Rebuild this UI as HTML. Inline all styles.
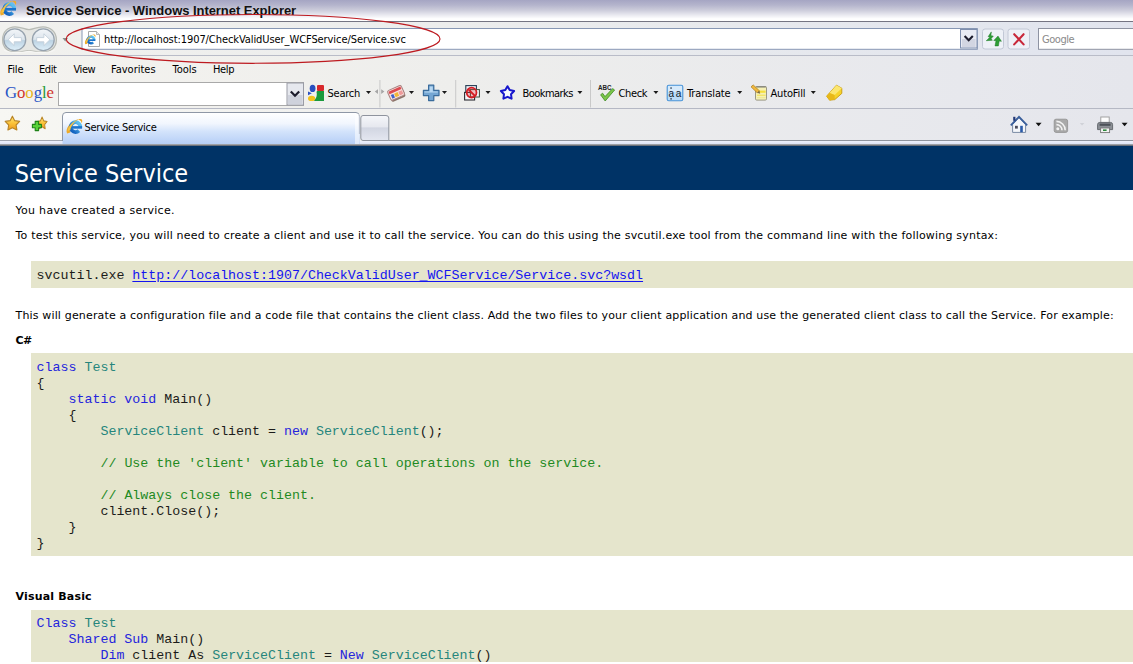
<!DOCTYPE html>
<html>
<head>
<meta charset="utf-8">
<title>Service Service - Windows Internet Explorer</title>
<style>
html,body{margin:0;padding:0;}
body{width:1133px;height:664px;overflow:hidden;background:#fff;position:relative;font-family:"DejaVu Sans Condensed","Liberation Sans",sans-serif;color:#000;}
.abs{position:absolute;}
#titlebar{left:0;top:0;width:1133px;height:21px;background:linear-gradient(#a5a5c3 0px,#b4b4cc 5px,#cbcbda 10px,#e6e6ee 14.5px,#fdfdfe 18.5px,#ffffff 21px);}
#title{left:26px;top:1.7px;font:bold 13px/17px "Liberation Sans",sans-serif;letter-spacing:-0.05px;color:#111;white-space:nowrap;}
#tline{left:0;top:20.7px;width:1133px;height:1.7px;background:#747482;}
#addr{left:0;top:22px;width:1133px;height:33px;background:linear-gradient(90deg,#f1f1ee 0%,#eceded 40%,#e3e6ee 85%,#e1e4ee 100%);}
#addrline{left:0;top:55px;width:1133px;height:1px;background:#b9bcc8;}
#menubar{left:0;top:56px;width:1133px;height:24px;background:linear-gradient(90deg,#f4f3ef 0%,#eeeeec 40%,#e7e8ed 85%,#e5e6ec 100%);}
.menu{top:63px;font:11px/14px "DejaVu Sans Condensed","Liberation Sans",sans-serif;white-space:nowrap;}
#gbar{left:0;top:80px;width:1133px;height:28px;background:linear-gradient(90deg,#f4f3ef 0%,#eeeeec 40%,#e7e8ed 85%,#e5e6ec 100%);}
#gline{left:0;top:108px;width:1133px;height:1px;background:#b5b8c4;}
#tabrow{left:0;top:109px;width:1133px;height:32px;background:linear-gradient(90deg,#f7f7f3 0%,#eeeeed 40%,#e7e8ed 85%,#e5e6ec 100%);}
#tabline{left:0;top:141px;width:1133px;height:5px;background:linear-gradient(#eef1fb 0px,#dfe5f6 2.6px,#b4b6ba 3px,#8a8d92 4px,#4a5566 5px);}
.tb{top:87px;font:11px/14px "DejaVu Sans Condensed","Liberation Sans",sans-serif;white-space:nowrap;}
.arr{width:0;height:0;border-left:3px solid transparent;border-right:3px solid transparent;border-top:3px solid #222;top:92px;}
#urlbox{left:81px;top:29px;width:895px;height:19px;background:#fff;border:1px solid #8e9db8;}
#url{left:104px;top:33px;font:11px/14px "DejaVu Sans Condensed","Liberation Sans",sans-serif;white-space:nowrap;letter-spacing:-0.078px;}
#page{left:0;top:146px;width:1133px;height:518px;background:#fff;}
#h1{left:0;top:146px;width:1133px;height:44px;background:#003366;}
#h1t{left:14.8px;top:156.5px;letter-spacing:0px;font:25px/34px "DejaVu Sans Condensed","Liberation Sans",sans-serif;color:#fff;white-space:nowrap;}
.p{left:15.5px;font:11px/14px "DejaVu Sans","Liberation Sans",sans-serif;white-space:nowrap;}
.b{font-weight:bold;}
pre{position:absolute;margin:0;left:30.5px;width:1103px;background:#e5e5cc;font:13.3px/16px "Liberation Mono",monospace;padding:0;box-sizing:border-box;padding-left:6.1px;color:#1c1c1a;}
pre a{color:#1414f0;text-decoration:underline;text-underline-offset:2px;text-decoration-thickness:1px;}
.k{color:#2424dc;}.t{color:#26857c;}.c{color:#228a1f;}
</style>
</head>
<body>
<div id="titlebar" class="abs"></div>
<div id="title" class="abs">Service Service - Windows Internet Explorer</div>
<div id="tline" class="abs"></div>
<div id="addr" class="abs"></div>
<div id="addrline" class="abs"></div>
<div id="menubar" class="abs"></div>
<div class="abs menu" style="left:7.5px;letter-spacing:-0.15px">File</div>
<div class="abs menu" style="left:39px;letter-spacing:-0.4px">Edit</div>
<div class="abs menu" style="left:73.5px;letter-spacing:-0.45px">View</div>
<div class="abs menu" style="left:111px">Favorites</div>
<div class="abs menu" style="left:172.5px">Tools</div>
<div class="abs menu" style="left:213px;letter-spacing:-0.35px">Help</div>
<div id="gbar" class="abs"></div>
<div id="gline" class="abs"></div>
<div id="tabrow" class="abs"></div>
<div id="tabline" class="abs"></div>

<svg id="chrome" class="abs" style="left:0;top:0" width="1133" height="146" viewBox="0 0 1133 146">
<defs>
<linearGradient id="gBtn" x1="0" y1="0" x2="0" y2="1"><stop offset="0" stop-color="#f3f6f9"/><stop offset="0.48" stop-color="#dde5ec"/><stop offset="0.54" stop-color="#bdd3e3"/><stop offset="1" stop-color="#dff0fa"/></linearGradient>
<linearGradient id="gTab" x1="0" y1="0" x2="0" y2="1"><stop offset="0" stop-color="#ffffff"/><stop offset="0.35" stop-color="#f1f6fe"/><stop offset="0.6" stop-color="#d3e3fb"/><stop offset="1" stop-color="#b6cff6"/></linearGradient>
<linearGradient id="gNew" x1="0" y1="0" x2="0" y2="1"><stop offset="0" stop-color="#f6f7fa"/><stop offset="0.45" stop-color="#e6e8ef"/><stop offset="0.5" stop-color="#d2d6e2"/><stop offset="1" stop-color="#e4e7f0"/></linearGradient>
<linearGradient id="gIE" x1="0" y1="0" x2="0" y2="1"><stop offset="0" stop-color="#5cc0f0"/><stop offset="1" stop-color="#1464c0"/></linearGradient>
<linearGradient id="gStar" x1="0" y1="0" x2="0" y2="1"><stop offset="0" stop-color="#ffe678"/><stop offset="0.5" stop-color="#fbc43a"/><stop offset="1" stop-color="#ee9a1c"/></linearGradient>
<g id="ie">
  <path d="M0.8 15.6 C-1.8 11 4 3 13 0.8 C7.6 3.6 2.8 10 4 14.6 Z" fill="#eeaa28"/>
  <circle cx="9.3" cy="9" r="5" fill="none" stroke="url(#gIE)" stroke-width="3.8" stroke-dasharray="27 4.4" transform="rotate(46 9.3 9)"/>
  <rect x="5" y="8" width="11" height="2.6" fill="#1c74cc"/>
  <path d="M1.4 13 C1.6 8 6 3.4 12.6 1 C8 3.8 4.4 8 4 12.2 Z" fill="#f4c244"/>
  <path d="M12.2 1.2 C15.8 -0.2 17.2 2 15.6 5.2 C15.4 3.2 14.4 2.2 12.2 1.2 Z" fill="#eeaa28"/>
</g>
<path id="darr" d="M0 0 L5 0 L2.5 3 Z" fill="#1a1a1a"/>
<path id="star5" d="M8.0 0.6 L10.4 5.3 L15.6 6.1 L11.9 9.9 L12.7 15.1 L8.0 12.7 L3.3 15.1 L4.1 9.9 L0.4 6.1 L5.6 5.3 Z" stroke-linejoin="round"/>
</defs>

<!-- title icon -->
<use href="#ie" x="0" y="0"/>

<!-- back / forward -->
<path d="M2.6 39.8 C2.6 31.4 8.4 26.8 15 26.8 C22 26.8 24.4 29.6 29 29.6 C33.6 29.6 36 26.8 43 26.8 C50 26.8 56.4 31.4 56.4 39.8 C56.4 48 50 52.2 43 52.2 C36 52.2 33.6 50.6 29 50.6 C24.4 50.6 22 52.2 15 52.2 C8.4 52.2 2.6 48 2.6 39.8 Z" fill="#e6e7e4" stroke="#b9bcb6" stroke-width="1.3"/>
<path d="M4 50 C10 53.4 20 53 29 51.4 C38 53 48 53.4 54.6 50" fill="none" stroke="#f6f6f4" stroke-width="1.4"/>
<circle cx="14.8" cy="39.7" r="10.9" fill="url(#gBtn)" stroke="#96a2ae" stroke-width="1.3"/>
<circle cx="43.3" cy="39.7" r="10.9" fill="url(#gBtn)" stroke="#96a2ae" stroke-width="1.3"/>
<path d="M8.2 39.7 L14.2 33.8 L14.2 37.6 L21.4 37.6 L21.4 41.8 L14.2 41.8 L14.2 45.6 Z" fill="#fff" stroke="#c3cfda" stroke-width="0.9" stroke-linejoin="round"/>
<path d="M49.9 39.7 L43.9 33.8 L43.9 37.6 L36.7 37.6 L36.7 41.8 L43.9 41.8 L43.9 45.6 Z" fill="#fff" stroke="#c3cfda" stroke-width="0.9" stroke-linejoin="round"/>
<path d="M62.5 38 L68 38 L65.2 41.4 Z" fill="#8a8f8a"/>

<!-- url box -->
<rect x="82" y="28.5" width="895.3" height="20.8" fill="#fff" stroke="#8797b4" stroke-width="1"/>
<path d="M88.5 31.5 L96.5 31.5 L99.5 34.5 L99.5 46.5 L88.5 46.5 Z" fill="#fff" stroke="#a8a8a8" stroke-width="1"/>
<path d="M96.5 31.5 L96.5 34.5 L99.5 34.5" fill="#e8e8e8" stroke="#a8a8a8" stroke-width="0.8"/>
<g transform="translate(84.8,34) scale(0.66)"><use href="#ie"/></g>
<!-- url dropdown -->
<rect x="960.5" y="29.5" width="16.5" height="18.5" fill="#e8ebf3" stroke="#7f8fae" stroke-width="1"/>
<rect x="962" y="39" width="13.5" height="8" fill="#d2d6e2"/>
<path d="M964.6 36 L968.7 40.2 L972.8 36" fill="none" stroke="#1c1c2c" stroke-width="2.1"/>
<!-- refresh -->
<rect x="982.5" y="29" width="21" height="20" rx="2.5" fill="#eef1f7" stroke="#c2c8d6"/>
<path d="M992.6 32.2 L989.4 37 L991.4 37.4 L987.6 41 L993.6 40.6 L992.4 39 L994.6 36.4 L992.2 36 Z" fill="#2f9e36" stroke="#1d7a26" stroke-width="0.5" stroke-linejoin="round" transform="translate(-1.3,-0.3)"/>
<path d="M997.4 35.8 L993.2 40.2 L995.4 40.4 L994.4 45.6 L997.8 45.6 L998.6 40.8 L1000.8 41 Z" fill="#2f9e36" stroke="#1d7a26" stroke-width="0.5" stroke-linejoin="round" transform="translate(0.6,0.3)"/>
<!-- stop -->
<rect x="1008" y="29" width="21.5" height="20" rx="2.5" fill="#eef1f7" stroke="#c2c8d6"/>
<path d="M1014.2 34.2 L1023.6 44.4 M1023.6 34.2 L1014.2 44.4" stroke="#c8283a" stroke-width="2.1" stroke-linecap="round"/>
<!-- search box -->
<rect x="1038.5" y="28.5" width="100" height="20.8" fill="#fff" stroke="#8e93a2" stroke-width="1"/>

<!-- red ellipse annotation -->
<ellipse cx="253.1" cy="38.9" rx="186.9" ry="24.4" fill="none" stroke="#bd1a20" stroke-width="1.15"/>

<!-- google toolbar input -->
<rect x="58.5" y="82.5" width="245" height="23" fill="#fff" stroke="#a9a9a9" stroke-width="1"/>
<rect x="287" y="83" width="16.5" height="22" fill="#e6e8ee" stroke="#9a9ca6" stroke-width="1"/>
<rect x="288" y="95" width="14.5" height="9.5" fill="#cfd2dc"/>
<path d="M290.8 91.5 L295 95.8 L299.2 91.5" fill="none" stroke="#1c1c2c" stroke-width="2.2"/>

<!-- google search icon -->
<ellipse cx="312.6" cy="88.4" rx="2.9" ry="3.6" fill="#2a50c0"/>
<path d="M308 91.6 L311.8 93.3 L308 95.2 Z" fill="#2a50c0"/>
<rect x="317" y="85" width="7" height="6" rx="1" fill="#d8282c"/>
<path d="M317 91 L324 91 L324 101 L313.5 101 C316 99 317.5 96 316.5 92 Z" fill="#1a9a3c"/>
<ellipse cx="311.6" cy="98.4" rx="3.6" ry="2.7" fill="#f3c21c"/>
<use href="#darr" x="366" y="91"/>
<!-- grip -->
<path d="M374.8 91.6 L378 89.2 L378 94 Z M384.4 91.6 L381.2 89.2 L381.2 94 Z" fill="#a6a6a6"/>
<rect x="379.4" y="80" width="1" height="27.5" fill="#c9c9c9"/>
<!-- card icon -->
<g transform="rotate(-24 396 93)">
  <rect x="388.8" y="89.4" width="15" height="10.6" rx="1.8" fill="#8a7468"/>
  <rect x="388.6" y="87.6" width="15" height="10.6" rx="1.8" fill="#f8e4e0" stroke="#a88080" stroke-width="1"/>
  <rect x="389.6" y="88.8" width="13" height="2.8" fill="#dc4a50"/>
  <rect x="390.4" y="92.8" width="2.8" height="4" fill="#3f62cc"/>
  <rect x="394" y="92.8" width="3.8" height="4" fill="#f2b636"/>
  <rect x="398.6" y="92.8" width="3.8" height="4" fill="#ee9a9a"/>
</g>
<use href="#darr" x="409" y="91"/>
<!-- plus -->
<path d="M428.6 85.2 L433.8 85.2 L433.8 90.4 L439 90.4 L439 95.6 L433.8 95.6 L433.8 100.6 L428.6 100.6 L428.6 95.6 L423.4 95.6 L423.4 90.4 L428.6 90.4 Z" fill="#74a6d3" stroke="#3a6c9c" stroke-width="1.2" stroke-linejoin="round"/>
<path d="M429.6 86.4 L432.8 86.4 L432.8 91.4 L437.8 91.4 L437.8 92.6 L424.6 92.6 L424.6 91.4 L429.6 91.4 Z" fill="#b8d8f2"/>
<use href="#darr" x="442" y="91"/>
<rect x="455.2" y="80" width="1" height="27.5" fill="#c9c9c9"/>
<!-- popup blocker -->
<rect x="465.8" y="85.6" width="10.6" height="9" fill="#f1f3f8" stroke="#223c52" stroke-width="1.1"/>
<rect x="464.6" y="92.4" width="10" height="7.6" fill="#f4f4f8" stroke="#2c2c34" stroke-width="1.1"/>
<rect x="470.4" y="89.6" width="9" height="7.4" fill="#f6f6fa" stroke="#3a4a3a" stroke-width="1"/>
<circle cx="471.6" cy="92.6" r="4.9" fill="#e03030" fill-opacity="0.28" stroke="#d41c24" stroke-width="1.8"/>
<path d="M468.2 89.2 L475 96" stroke="#d41c24" stroke-width="1.8"/>
<use href="#darr" x="485.5" y="91"/>
<!-- bookmark star -->
<path d="M507.5 86.2 L509.7 90.1 L514.1 91.0 L511.0 94.2 L511.6 98.7 L507.5 96.8 L503.4 98.7 L504.0 94.2 L500.9 91.0 L505.3 90.1 Z" fill="#f6f8ff" stroke="#1616cc" stroke-width="2" stroke-linejoin="round"/>
<use href="#darr" x="577.4" y="91"/>
<rect x="590" y="80" width="1" height="27.5" fill="#c9c9c9"/>
<!-- check -->
<text x="598" y="90.4" font-family="Liberation Sans, sans-serif" font-weight="bold" font-size="6.6" fill="#222" textLength="13.5" lengthAdjust="spacingAndGlyphs">ABC</text>
<path d="M600.6 94.8 L602.6 93.2 L605 96.6 L612.6 88.6 L614.6 90 L605.2 101 Z" fill="#7cc64a" stroke="#3c8a22" stroke-width="0.8" stroke-linejoin="round"/>
<use href="#darr" x="653.4" y="91"/>
<!-- translate -->
<rect x="667.2" y="85.2" width="15.6" height="15.6" rx="1.6" fill="#b9dbf7" stroke="#4a94d8" stroke-width="1.1"/>
<rect x="668" y="86" width="14" height="6" fill="#d6eafb"/>
<text x="668.4" y="97" font-family="Liberation Sans, sans-serif" font-size="10" fill="#101828">a</text>
<text x="675.8" y="97" font-family="Liberation Sans, sans-serif" font-size="10" fill="#101828">a</text>
<rect x="670.4" y="87.4" width="1.3" height="1.3" fill="#101828"/><rect x="670.4" y="98.2" width="1.3" height="1.3" fill="#101828"/>
<use href="#darr" x="737.2" y="91"/>
<!-- autofill -->
<rect x="755.5" y="86.5" width="11" height="13.6" rx="1.2" fill="#f6f1b4" stroke="#9a9884" stroke-width="1"/>
<rect x="756.4" y="86" width="9.4" height="1.6" fill="#8c8c80"/>
<rect x="758.6" y="90.6" width="7" height="2.2" fill="#f4de3c"/>
<rect x="757" y="94.6" width="8.6" height="1.4" fill="#f2e468"/>
<rect x="757" y="97.2" width="8.6" height="1" fill="#ece690"/>
<path d="M751 86.8 L753.2 84.9 L759.4 90.8 L757.2 92.8 Z" fill="#f0b83c" stroke="#a87a1c" stroke-width="0.7"/>
<path d="M757.2 92.8 L759.4 90.8 L760.2 93.8 Z" fill="#7a6a44"/>
<use href="#darr" x="810.8" y="91"/>
<!-- highlighter -->
<path d="M826.6 96.2 L836.4 85.2 L841.8 88.2 L841.8 93.4 L834.8 99.6 L829.6 100.2 Z" fill="#f6d32a" stroke="#c79a10" stroke-width="0.9" stroke-linejoin="round"/>
<path d="M836.4 85.2 L841.8 88.2 L834.6 95 L829.6 93 Z" fill="#fbe670"/>
<path d="M826.6 96.2 L829.6 93 L834.6 95 L834.8 99.6 L829.6 100.2 Z" fill="#e8b818"/>

<!-- fav stars -->
<g transform="translate(4.8,115.6) scale(0.95)"><use href="#star5" fill="url(#gStar)" stroke="#b98526" stroke-width="1.2"/></g>
<g transform="translate(36.8,116.6) scale(0.66,0.8)"><use href="#star5" fill="url(#gStar)" stroke="#b98526" stroke-width="1.4"/></g>
<path d="M35.2 121.4 L38.6 121.4 L38.6 124.4 L41.4 124.4 L41.4 127.8 L38.6 127.8 L38.6 130.6 L35.2 130.6 L35.2 127.8 L32.4 127.8 L32.4 124.4 L35.2 124.4 Z" fill="#58d238" stroke="#1f8218" stroke-width="1.1" stroke-linejoin="round"/>

<!-- tabs -->
<path d="M0 140.5 L62.5 140.5" stroke="#a2a6b0" stroke-width="1"/>
<path d="M62.5 144 L62.5 116 Q62.5 112.5 66 112.5 L356 112.5 Q359.5 112.5 359.5 116 L359.5 144 Z" fill="url(#gTab)"/><path d="M62.5 141 L62.5 116 Q62.5 112.5 66 112.5 L356 112.5 Q359.2 112.5 359.2 116" fill="none" stroke="#8e97a6" stroke-width="1"/><path d="M359.2 116 L359.2 134" fill="none" stroke="#aab3c4" stroke-width="1"/><rect x="355" y="114" width="4" height="30" fill="#fff" opacity="0.55"/>
<path d="M360.8 138 L360.8 118 Q360.8 115.5 363 115.5 L386 115.5 Q388.8 115.5 388.8 118 L388.8 140.5 L363 140.5 Q360.8 140.5 360.8 138 Z" fill="url(#gNew)" stroke="#8f949e" stroke-width="1"/>
<path d="M388.5 140.5 L1133 140.5" stroke="#8f949e" stroke-width="1"/>
<g transform="translate(66.4,118.3) scale(0.98)"><use href="#ie"/></g>

<!-- home -->
<path d="M1012.6 124.4 L1019 117.6 L1025.6 124.4 L1025.6 132.4 L1012.6 132.4 Z" fill="#f4f6fa" stroke="#7a8aa4" stroke-width="1"/>
<path d="M1010.8 125.4 L1019 116.8 L1027.2 125.4" fill="none" stroke="#3a5f9c" stroke-width="1.8" stroke-linejoin="miter"/>
<rect x="1013.2" y="116.8" width="2.2" height="4" fill="#243a78"/>
<rect x="1020.2" y="125.8" width="2.6" height="6.4" fill="#2a5aa8"/>
<rect x="1015" y="125.8" width="2.8" height="2.8" fill="#4a4a5a"/>
<path d="M1035.6 122.8 L1041.6 122.8 L1038.6 126.2 Z" fill="#111"/>
<!-- rss -->
<rect x="1054.2" y="119.2" width="13.4" height="13.2" rx="1.8" fill="#a9a9a9" stroke="#8f8f8f" stroke-width="0.8"/>
<circle cx="1057.8" cy="128.8" r="1.5" fill="#f2f2f2"/>
<path d="M1056.4 124.6 A5.6 5.6 0 0 1 1062 130.2" fill="none" stroke="#f2f2f2" stroke-width="1.6"/>
<path d="M1056.4 121.4 A8.8 8.8 0 0 1 1065.2 130.2" fill="none" stroke="#f2f2f2" stroke-width="1.6"/>
<path d="M1079.8 123 L1084.4 123 L1082.1 125.6 Z" fill="#d0d2d8"/>
<!-- printer -->
<rect x="1100.8" y="117" width="8.4" height="6" fill="#fdfdfd" stroke="#9a9a9a" stroke-width="0.9"/>
<path d="M1097.6 124.6 Q1097.6 122.4 1099.8 122.4 L1110.4 122.4 Q1112.6 122.4 1112.6 124.6 L1112.6 129.6 L1097.6 129.6 Z" fill="#8c9096" stroke="#5e6268" stroke-width="0.9"/>
<rect x="1099.6" y="123.6" width="11" height="2.2" fill="#4e5258"/>
<rect x="1100.6" y="128" width="9" height="4.6" fill="#f4f4f4" stroke="#777" stroke-width="0.9"/>
<rect x="1103" y="129.4" width="3.6" height="1.6" fill="#2a8a3a"/>
<path d="M1121.6 122.8 L1127.6 122.8 L1124.6 126.2 Z" fill="#111"/>
</svg>

<div class="abs" id="glogo" style="left:5px;top:80px;font:16.8px/26px 'Liberation Serif',serif;letter-spacing:-0.1px;white-space:nowrap"><span style="color:#2a56c6">G</span><span style="color:#d0342c">o</span><span style="color:#e8b41c">o</span><span style="color:#2a56c6">g</span><span style="color:#2a9a3a">l</span><span style="color:#d0342c">e</span></div>
<div class="abs tb" style="left:327.5px;letter-spacing:-0.23px">Search</div>
<div class="abs tb" style="left:522.5px;letter-spacing:-0.54px">Bookmarks</div>
<div class="abs tb" style="left:618.5px;letter-spacing:-0.35px">Check</div>
<div class="abs tb" style="left:687px;letter-spacing:-0.14px">Translate</div>
<div class="abs tb" style="left:770.5px;letter-spacing:-0.15px">AutoFill</div>
<div class="abs" id="tabt" style="left:84.5px;top:121px;letter-spacing:-0.29px;font:11px/14px 'DejaVu Sans Condensed','Liberation Sans',sans-serif;white-space:nowrap">Service Service</div>
<div class="abs" id="sbox" style="left:1042px;top:33px;font:11px/14px 'DejaVu Sans Condensed','Liberation Sans',sans-serif;color:#8a8a8a;white-space:nowrap;letter-spacing:-0.46px">Google</div>
<div id="url" class="abs">http://localhost:1907/CheckValidUser_WCFService/Service.svc</div>

<div id="page" class="abs"></div>
<div id="h1" class="abs"></div>
<div id="h1t" class="abs">Service Service</div>
<div class="abs p" style="top:204px;letter-spacing:0.29px">You have created a service.</div>
<div class="abs p" style="top:229px;letter-spacing:0.196px">To test this service, you will need to create a client and use it to call the service. You can do this using the svcutil.exe tool from the command line with the following syntax:</div>
<pre style="top:261.2px;height:27px;padding-top:6.4px">svcutil.exe <a>http://localhost:1907/CheckValidUser_WCFService/Service.svc?wsdl</a></pre>
<div class="abs p" style="top:309px;letter-spacing:0.161px">This will generate a configuration file and a code file that contains the client class. Add the two files to your client application and use the generated client class to call the Service. For example:</div>
<div class="abs p b" style="top:334px;letter-spacing:-0.69px">C#</div>
<pre style="top:353.2px;height:203.2px;padding-top:6.9px"><span class="k">class</span> <span class="t">Test</span>
{
    <span class="k">static void</span> Main()
    {
        <span class="t">ServiceClient</span> client = <span class="k">new</span> <span class="t">ServiceClient</span>();

        <span class="c">// Use the 'client' variable to call operations on the service.</span>

        <span class="c">// Always close the client.</span>
        client.Close();
    }
}</pre>
<div class="abs p b" style="top:590px;letter-spacing:0.18px">Visual Basic</div>
<pre style="top:609.6px;height:52px;padding-top:6.5px"><span class="k">Class</span> <span class="t">Test</span>
    <span class="k">Shared Sub</span> Main()
        <span class="k">Dim</span> client As <span class="t">ServiceClient</span> = <span class="k">New</span> <span class="t">ServiceClient</span>()</pre>
</body>
</html>
